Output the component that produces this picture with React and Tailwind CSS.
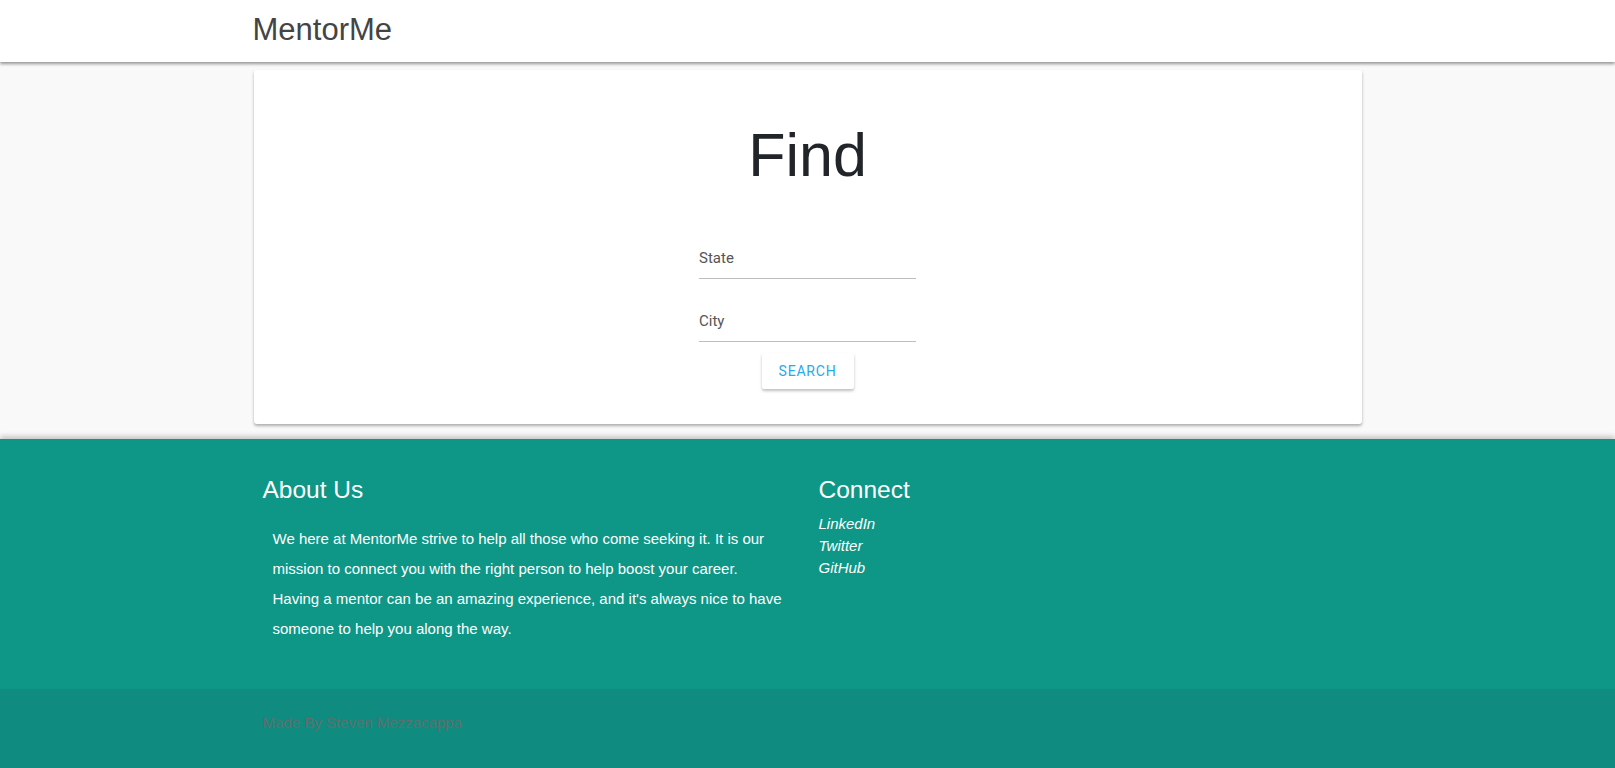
export default function App() {
  const sans = { fontFamily: '"Liberation Sans", Arial, sans-serif' };
  const roboto = { fontFamily: 'Roboto, "Liberation Sans", sans-serif' };
  return (
    <div className="min-h-screen bg-[#f9f9f9]" style={sans}>
      <header className="relative z-10 h-[62px] bg-white shadow-[0_2px_3px_rgba(0,0,0,0.4)]">
        <div className="mx-auto w-[1110px] pt-[10px]">
          <div className="text-[31px] leading-[40px] text-[#444]">MentorMe</div>
        </div>
      </header>
      <main className="pt-[8px] pb-[15px]">
        <div className="mx-auto flex w-[1108px] flex-col items-center rounded-[3px] bg-white pt-[49px] pb-[35px] shadow-[0_2px_3px_rgba(0,0,0,0.3)]">
          <h1 className="text-[61px] leading-[72px] text-[#212529]">Find</h1>
          <div className="mt-[57px] w-[217px] border-b border-[#bdbdbd] pb-[10px] text-[15px] leading-[20px] text-[#555]" style={roboto}>
            State
          </div>
          <div className="mt-[32px] w-[217px] border-b border-[#bdbdbd] pb-[10px] text-[15px] leading-[20px] text-[#555]" style={roboto}>
            City
          </div>
          <button
            className="mt-[11px] h-[36px] w-[92px] rounded-[2px] bg-white text-[14px] font-normal tracking-[0.8px] text-[#29a9e8] shadow-[0_2px_3px_rgba(0,0,0,0.25)]"
            style={roboto}
          >
            SEARCH
          </button>
        </div>
      </main>
      <footer className="relative bg-[#0e9686] shadow-[0_-3px_5px_rgba(0,0,0,0.2)]">
        <div className="mx-auto flex h-[250px] w-[1110px] pt-[36px] text-white">
          <div className="w-[555px] pl-[10px]">
            <h2 className="text-[24.5px] leading-[29px]">About Us</h2>
            <p className="mt-[20px] w-[522px] pl-[10px] text-[15px] leading-[30px]">
              We here at MentorMe strive to help all those who come seeking it. It is our mission to connect you with the right person to help boost your career. Having a mentor can be an amazing experience, and it's always nice to have someone to help you along the way.
            </p>
          </div>
          <div className="pl-[11px]">
            <h2 className="text-[24.5px] leading-[29px]">Connect</h2>
            <ul className="mt-[9px] text-[15px] italic leading-[22px]">
              <li>LinkedIn</li>
              <li>Twitter</li>
              <li>GitHub</li>
            </ul>
          </div>
        </div>
        <div className="h-[80px] bg-[#0f8c7f]">
          <div className="mx-auto w-[1110px] pt-[24px] pl-[10px] text-[15px] leading-[20px] text-[#5f6e6e]">
            Made By Steven Mezzacappa
          </div>
        </div>
      </footer>
    </div>
  );
}
